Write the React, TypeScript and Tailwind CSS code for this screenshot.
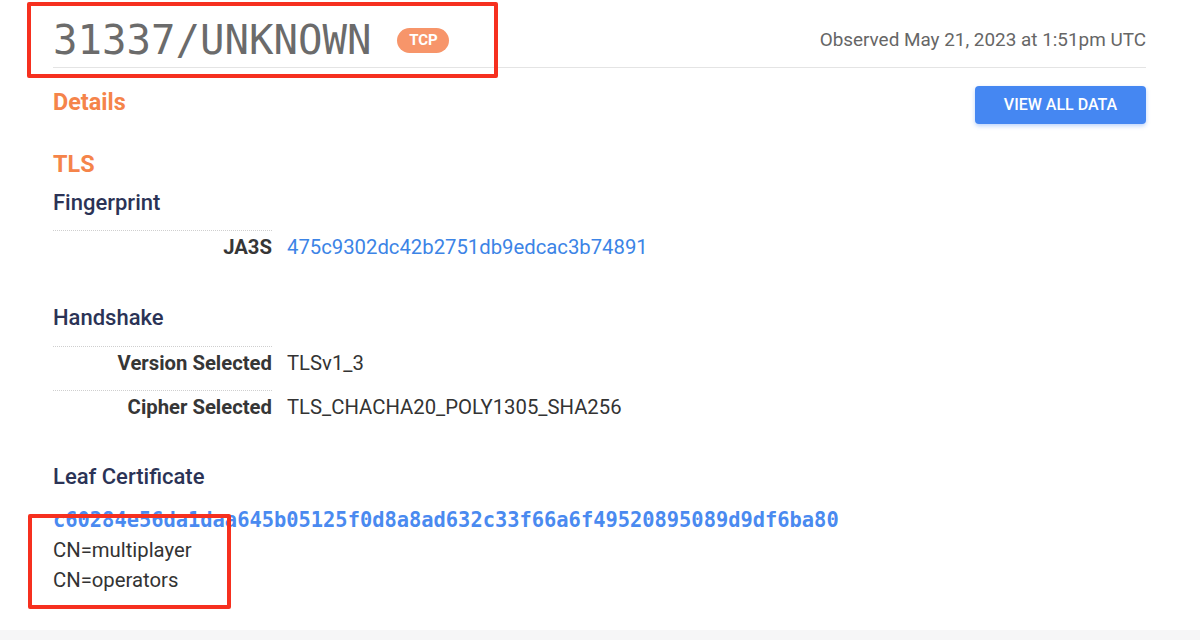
import React from "react";

const Row = ({ label, children }: { label: string; children: React.ReactNode }) => (
  <div className="flex">
    <div className="w-[219px] shrink-0 border-t border-dotted border-[#cfcfcf] pt-[4px] pb-[15px] text-right text-[20.3px] leading-[24px] font-bold text-[#363636]">
      {label}
    </div>
    <div className="pl-[15px] pt-[5px] text-[20.3px] leading-[24px]">{children}</div>
  </div>
);

export default function App() {
  return (
    <div
      className="relative flex h-[640px] w-[1200px] flex-col bg-white"
      style={{ fontFamily: "Roboto, 'Noto Sans', Arial, sans-serif" }}
    >
      <div className="flex-1 pr-[54px] pl-[53px]">
        {/* header */}
        <div className="flex items-center justify-between border-b border-[#e4e4e4] pt-[16px] pb-[3px]">
          <div className="flex items-center">
            <span
              className="text-[40.7px] leading-[48px] text-[#6b6b6b]"
              style={{ fontFamily: "'DejaVu Sans Mono', 'Liberation Mono', monospace" }}
            >
              31337/UNKNOWN
            </span>
            <span className="ml-[26px] flex h-[25px] w-[52px] items-center justify-center rounded-full bg-[#f7956a] text-[15px] font-bold text-white">
              TCP
            </span>
          </div>
          <span className="text-[18.9px] leading-[24px] text-[#666666]">Observed May 21, 2023 at 1:51pm UTC</span>
        </div>

        {/* details row */}
        <div className="mt-[18px] flex items-start justify-between">
          <div className="mt-[4px] text-[23.4px] leading-[24px] font-bold text-[#f5844a]">Details</div>
          <button className="h-[38px] w-[171px] rounded-[4px] bg-[#4587f2] text-[16px] font-medium text-white shadow-[0_2px_4px_rgba(66,133,244,0.35)]">
            VIEW ALL DATA
          </button>
        </div>

        <div className="mt-[28px] text-[23.4px] leading-[24px] font-bold text-[#f5844a]">TLS</div>

        <div className="mt-[15px] mb-[15px] text-[22px] leading-[24px] font-medium text-[#2b3356]">Fingerprint</div>
        <Row label="JA3S">
          <span className="text-[#3c84e6]">475c9302dc42b2751db9edcac3b74891</span>
        </Row>

        <div className="mt-[32px] mb-[16px] text-[22px] leading-[24px] font-medium text-[#2b3356]">Handshake</div>
        <Row label="Version Selected">
          <span className="text-[#333333]">TLSv1_3</span>
        </Row>
        <Row label="Cipher Selected">
          <span className="text-[#333333]">TLS_CHACHA20_POLY1305_SHA256</span>
        </Row>

        <div className="mt-[31px] text-[22px] leading-[24px] font-medium text-[#2b3356]">Leaf Certificate</div>
        <div
          className="mt-[16px] text-[20.4px] leading-[30px] font-bold text-[#4a8af0]"
          style={{ fontFamily: "'DejaVu Sans Mono', 'Liberation Mono', monospace" }}
        >
          c60284e56da1daa645b05125f0d8a8ad632c33f66a6f49520895089d9df6ba80
        </div>
        <div className="text-[20.3px] leading-[30px] text-[#333333]">CN=multiplayer</div>
        <div className="text-[20.3px] leading-[30px] text-[#333333]">CN=operators</div>
      </div>
      <div className="h-[10px] bg-[#f6f6f7]" />

      {/* annotation boxes */}
      <div className="pointer-events-none absolute left-[27px] top-[2px] h-[76px] w-[471px] rounded-[2px] border-[4px] border-[#f6301f]" />
      <div className="pointer-events-none absolute left-[28px] top-[514px] h-[95px] w-[203px] rounded-[2px] border-[4px] border-[#f6301f]" />
    </div>
  );
}
